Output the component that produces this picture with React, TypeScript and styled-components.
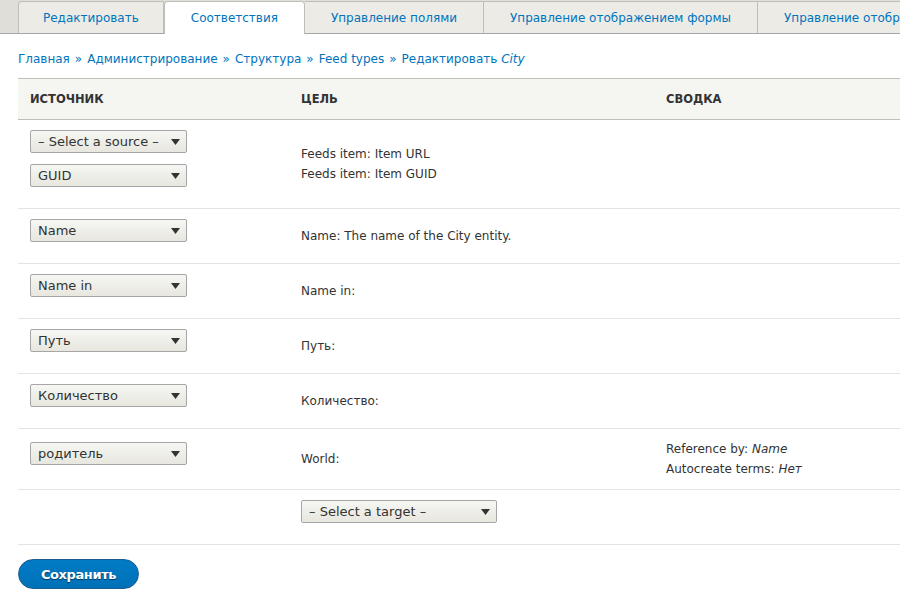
import React from "react";
import styled, { createGlobalStyle } from "styled-components";

const Global = createGlobalStyle`
  html, body { margin: 0; padding: 0; background: #fff; overflow: hidden; }
  body { font-family: "DejaVu Sans", Verdana, sans-serif; color: #333; width: 900px; }
  #root { width: 900px; overflow: hidden; }
`;

const TabBar = styled.ul`
  display: flex;
  margin: 0;
  padding: 1px 0 0 18px;
  list-style: none;
  background: #e0ded8;
  border-bottom: 1px solid #a6a6a6;
  height: 34px;
  box-sizing: border-box;
  width: 1200px;
  white-space: nowrap;
`;

const Tab = styled.li<{ $active?: boolean }>`
  display: flex;
  align-items: center;
  height: ${(p) => (p.$active ? "33px" : "32px")};
  padding: 0 26px 0 26px;
  border: 1px solid #bfbfba;
  border-bottom: none;
  border-left: ${(p) => (p.$active ? "1px solid #bfbfba" : "none")};
  background: ${(p) => (p.$active ? "#fff" : "#ecebe6")};
  border-radius: ${(p) => (p.$active ? "4px 4px 0 0" : "0")};
  margin-bottom: ${(p) => (p.$active ? "-1px" : "0")};
  box-sizing: border-box;
  font-size: 12px;
  color: #0074bd;
  &:first-child { border-left: 1px solid #bfbfba; border-radius: 4px 0 0 0; padding: 0 24px; }
`;

const Main = styled.div`
  padding: 0 0 0 18px;
`;

const Breadcrumb = styled.nav`
  margin: 17px 0 10px;
  font-size: 12px;
  line-height: 17px;
  color: #0074bd;
  white-space: nowrap;
  em { font-style: italic; }
`;

const Sep = styled.span`
  color: #0074bd;
  margin: 0 5px;
`;

const Table = styled.table`
  border-collapse: collapse;
  width: 1100px;
  table-layout: fixed;
  font-size: 12px;
`;

const Th = styled.th`
  text-align: left;
  text-transform: uppercase;
  font-weight: bold;
  font-size: 11.5px;
  color: #333;
  background: #f5f5f2;
  border-top: 1px solid #bfbfba;
  border-bottom: 1px solid #bfbfba;
  padding: 0 12px;
  height: 41px;
  box-sizing: border-box;
`;

const Tr = styled.tr`
  border-bottom: 1px solid #e6e4df;
`;

const Td = styled.td`
  padding: 10px 12px;
  vertical-align: middle;
  line-height: 20px;
  color: #333;
`;

const SelectWrap = styled.div<{ $w: number }>`
  position: relative;
  width: ${(p) => p.$w}px;
  height: 23px;
  margin-bottom: 11px;
  box-sizing: border-box;
  border: 1px solid #a6a6a6;
  border-radius: 2px;
  background: linear-gradient(#f6f6f3, #e7e7df);
  font-size: 13px;
  line-height: 21px;
  padding: 0 0 0 7px;
  color: #333;
  white-space: nowrap;
`;

const Arrow = styled.svg`
  position: absolute;
  right: 6px;
  top: 8px;
`;

const Button = styled.button`
  margin: 14px 0 0;
  height: 30px;
  width: 121px;
  border-radius: 20px;
  border: 1px solid #1e5c90;
  background: linear-gradient(#007bc6, #0071b8);
  color: #fff;
  font-family: "DejaVu Sans", Verdana, sans-serif;
  font-weight: bold;
  font-size: 13px;
  letter-spacing: -0.4px;
  text-shadow: 0 1px 1px rgba(0, 0, 0, 0.5);
  padding: 0;
`;

const Select = ({ label, w = 157 }: { label: string; w?: number }) => (
  <SelectWrap $w={w}>
    {label}
    <Arrow width="9" height="6" viewBox="0 0 9 6">
      <path d="M0 0 H9 L4.5 6 Z" fill="#333" />
    </Arrow>
  </SelectWrap>
);

const rows: { src: string[]; target: React.ReactNode; summary?: React.ReactNode }[] = [
  {
    src: ["– Select a source –", "GUID"],
    target: (
      <>
        Feeds item: Item URL
        <br />
        Feeds item: Item GUID
      </>
    ),
  },
  { src: ["Name"], target: "Name: The name of the City entity." },
  { src: ["Name in"], target: "Name in:" },
  { src: ["Путь"], target: "Путь:" },
  { src: ["Количество"], target: "Количество:" },
  {
    src: ["родитель"],
    target: "World:",
    summary: (
      <>
        Reference by: <em>Name</em>
        <br />
        Autocreate terms: <em>Нет</em>
      </>
    ),
  },
];

export default function App() {
  return (
    <>
      <Global />
      <TabBar>
        <Tab>Редактировать</Tab>
        <Tab $active>Соответствия</Tab>
        <Tab>Управление полями</Tab>
        <Tab>Управление отображением формы</Tab>
        <Tab>Управление отображением</Tab>
      </TabBar>
      <Main>
        <Breadcrumb>
          Главная<Sep>»</Sep>Администрирование<Sep>»</Sep>Структура<Sep>»</Sep>Feed types<Sep>»</Sep>
          Редактировать <em>City</em>
        </Breadcrumb>
        <Table>
          <colgroup>
            <col style={{ width: 271 }} />
            <col style={{ width: 365 }} />
            <col />
          </colgroup>
          <thead>
            <tr>
              <Th>Источник</Th>
              <Th>Цель</Th>
              <Th>Сводка</Th>
            </tr>
          </thead>
          <tbody>
            {rows.map((r, i) => (
              <Tr key={i}>
                <Td>
                  {r.src.map((s) => (
                    <Select key={s} label={s} />
                  ))}
                </Td>
                <Td>{r.target}</Td>
                <Td>{r.summary}</Td>
              </Tr>
            ))}
            <Tr>
              <Td />
              <Td>
                <Select label="– Select a target –" w={196} />
              </Td>
              <Td />
            </Tr>
          </tbody>
        </Table>
        <Button>Сохранить</Button>
      </Main>
    </>
  );
}
